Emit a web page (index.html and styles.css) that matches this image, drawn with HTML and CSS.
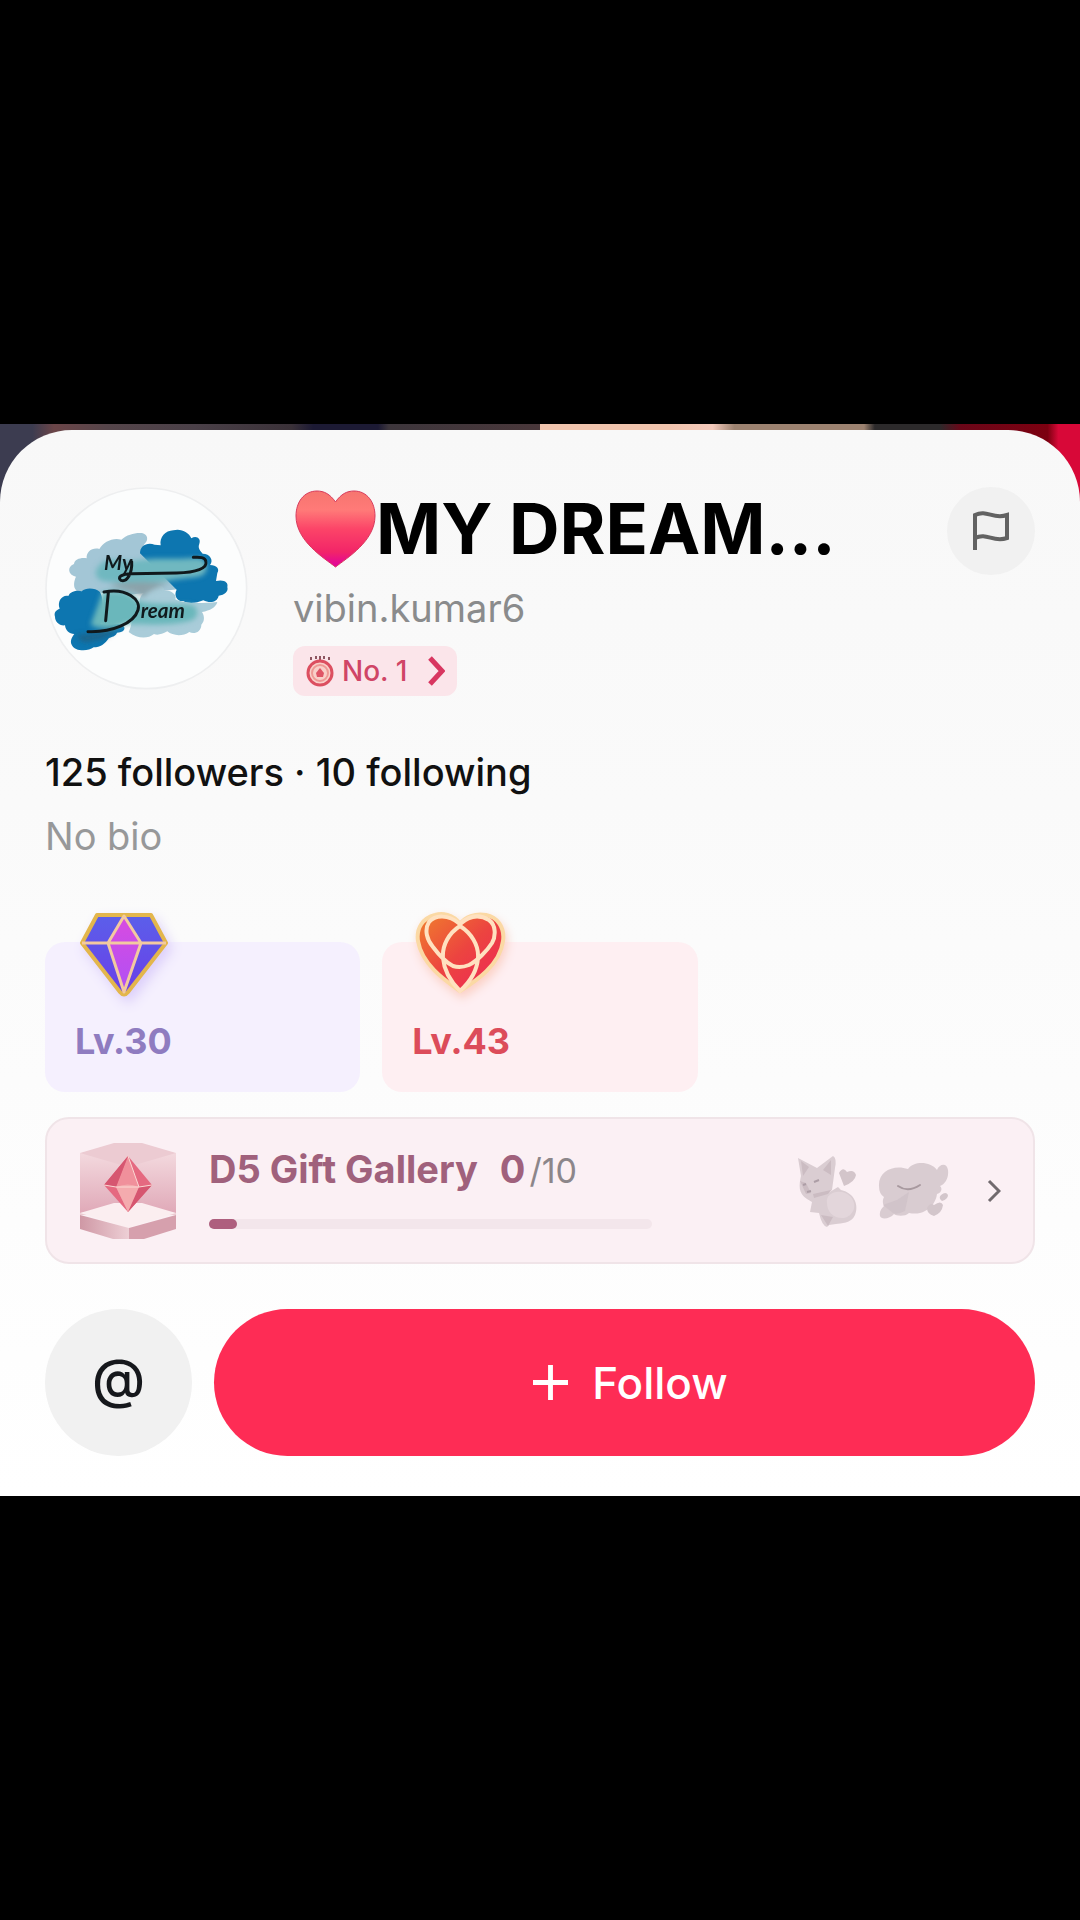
FILE: index.html
```html
<!DOCTYPE html>
<html lang="en">

<head>
    <meta charset="utf-8">
    <meta name="viewport" content="width=device-width, initial-scale=1.0">
    <title>MY DREAM - profile</title>
    <link rel="stylesheet" href="styles.css">
</head>

<body>
    <main class="stage">
        <section class="sheet">
            <header class="profile">
                <svg class="avatar" viewBox="45 51 609 609" role="img" aria-label="My Dream">
                    <defs>
                        <filter id="wash" x="-20%" y="-20%" width="140%" height="140%">
                            <feGaussianBlur stdDeviation="8" />
                        </filter>
                    </defs>
                    <circle cx="349" cy="355" r="301" fill="#fcfdfd" stroke="#eeeff0" stroke-width="5" />
                    <path fill="#a3c6d6" d="M140 362c-12-10-8-30-2-42-24-4-28-30-6-38 2-14 20-20 38-17-2-20 18-34 38-28 12-22 42-36 66-28 16-16 44-22 62-20 18 4 20 22 8 32l-14 24 100 40 40 70-180 20z" />
                    <path fill="#0d76b0" d="M330 250c0-22 20-34 44-26l18 2c-4-24 14-44 38-45 24-6 46 6 54 24 16-10 30 2 24 16-6 14 4 22 10 30 22 0 34 20 22 34 20 0 30 12 22 24l-4 24c24-6 38 4 34 18 4 14-8 24-26 26-4 20-26 24-46 14-20 8-44 12-60 2-18 2-30-16-20-34l-30-30z" />
                    <path fill="#a9ccd9" d="M296 486c10-14 10-60 34-86-4-20 8-34 30-40 10-20 40-18 44 2 20-2 38 14 32 26 26 14 74 12 126 8-4 16-22 26-46 30 10 16 6 30-2 38 0 22-22 30-36 22-20 14-50 12-66-2-18 10-30 12-40 8-20 16-50 14-76-6z" />
                    <path fill="#0d76b0" d="M75 440c-4-14 4-20 14-24-8-20 6-42 26-38 6-16 30-18 40-14 14-14 44-8 52 0 14 10 14 60 4 98 14 2 40 2 56 0 24 4 22 26-6 26-4 12-16 12-24 16-12 18-26 28-46 28-18 14-58 12-66-8-6-12 2-24 8-32-16 0-26-10-28-26-18 2-30-12-30-26z" />
                    <g filter="url(#wash)">
                        <path fill="#6fb8c0" d="M205 290c20-30 60-22 100-16 60-14 130-4 190-10 30-4 44 20 30 44-10 18-50 12-110 24-70 10-150 6-190 2-26-4-36-24-20-44z" />
                        <path fill="#8ba3aa" d="M236 346c60-14 130-12 180-4-30 10-60 16-74 40-20-18-60-22-106-36z" />
                        <path fill="#6bb7bb" d="M216 366c40-10 90-6 108 26 40 14 100 6 160 12 24 8 24 40-2 48-60 16-130 12-190 10-40 20-90 16-110 2 10-30 24-60 34-98z" />
                        <path fill="#245873" opacity=".6" d="M140 492c40 8 80-14 116-20 8 14-40 40-66 40-20 10-44 4-50-20z" />
                    </g>
                    <g fill="none" stroke="#10191c" stroke-width="9" stroke-linecap="round" stroke-linejoin="round">
                        <path d="M305 275c2 36-14 62-32 56-12-8 0-20 32-20l135-2c60-2 92-14 88-34-2-14-18-14-38-13" />
                        <path d="M235 368l-8 84M222 366c68-14 112 24 102 54-12 40-78 68-150 65" />
                    </g>
                    <text class="scrawl" x="222" y="300">My</text>
                    <text class="scrawl" x="332" y="443">ream</text>
                </svg>

                <div class="identity">
                    <h1 class="name">
                        <svg class="name-heart" viewBox="0 0 81 78" role="img" aria-label="heart">
                            <defs>
                                <linearGradient id="heartFill" x1="0" y1="0" x2="0" y2="1">
                                    <stop offset="0" stop-color="#f6756f" />
                                    <stop offset=".25" stop-color="#ff7a78" />
                                    <stop offset=".5" stop-color="#fc4468" />
                                    <stop offset=".8" stop-color="#f22568" />
                                    <stop offset="1" stop-color="#e000a0" />
                                </linearGradient>
                            </defs>
                            <path fill="url(#heartFill)" stroke="#d83a5c" stroke-width="1" d="M40.500 12C35 4 29 1 22 1 9 1 1 12 1 26c0 25 28 42 39.500 51C52 68 80 51 80 26 80 12 72 1 59 1 52 1 46 4 40.500 12z" />
                        </svg>
                        <span>MY DREAM...</span>
                    </h1>
                    <p class="username">vibin.kumar6</p>
                    <a class="rank" href="#">
                        <svg class="rank-medal" viewBox="0 0 28 32" aria-hidden="true">
                            <path d="M5 2v3M10 1v3M14 1v4M18 1v3M23 2v3" stroke="#8d5560" stroke-width="2" />
                            <circle cx="14" cy="18" r="12" fill="#f9cfc9" stroke="#dc4f60" stroke-width="3" />
                            <circle cx="14" cy="18" r="8" fill="none" stroke="#ee9a95" stroke-width="2" />
                            <path d="M14 13l4 5-1 4h-6l-1-4z" fill="#df5566" />
                        </svg>
                        <span>No. 1</span>
                        <svg class="rank-arrow" viewBox="0 0 18 30" aria-hidden="true">
                            <path d="M3 2l12 13L3 28" fill="none" stroke="#d83660" stroke-width="5" />
                        </svg>
                    </a>
                </div>

                <button class="report" type="button" aria-label="Report">
                    <svg viewBox="0 0 36 40" aria-hidden="true">
                        <path d="M2 39V4c12-6 18 5 32 0v23c-14 5-20-6-32 0" fill="none" stroke="#626262" stroke-width="4" />
                    </svg>
                </button>
            </header>

            <p class="stats">125 followers · 10 following</p>
            <p class="bio">No bio</p>

            <div class="levels">
                <div class="level level-gifter">
                    <svg class="level-icon" viewBox="0 0 92 88" aria-hidden="true">
                        <defs>
                            <linearGradient id="gemSide" x1="0" y1="0" x2="0" y2="1">
                                <stop offset="0" stop-color="#5b5fea" />
                                <stop offset="1" stop-color="#6a3ee8" />
                            </linearGradient>
                            <linearGradient id="gemCore" x1="0" y1="0" x2="0" y2="1">
                                <stop offset="0" stop-color="#d94be0" />
                                <stop offset="1" stop-color="#b050f5" />
                            </linearGradient>
                        </defs>
                        <path d="M19 3h54l15 28-38 49q-4 5-8 0L4 31z" fill="url(#gemSide)" stroke="#e3b64c" stroke-width="4" stroke-linejoin="round" />
                        <path d="M46 4l17 27-17 48-16-48z" fill="url(#gemCore)" />
                        <path d="M4 31h84M46 4L30 31l16 49 17-49z" fill="none" stroke="#f3c9a0" stroke-width="3" stroke-linejoin="round" />
                    </svg>
                    <span>Lv.30</span>
                </div>
                <div class="level level-fan">
                    <svg class="level-icon" viewBox="0 0 92 88" aria-hidden="true">
                        <defs>
                            <linearGradient id="fanFill" x1="0" y1="0" x2="1" y2="1">
                                <stop offset="0" stop-color="#f0802c" />
                                <stop offset=".5" stop-color="#ec4440" />
                                <stop offset="1" stop-color="#ee2458" />
                            </linearGradient>
                        </defs>
                        <path d="M45 12C38 2 27 1 20 3 8 6 1 16 3 29c4 24 28 40 42 50 16-10 40-26 43-50C90 15 82 5 71 3 60 1 50 5 45 12z" fill="url(#fanFill)" stroke="#fbd9a4" stroke-width="4" stroke-linejoin="round" />
                        <path d="M45 12C33 2 20 3 14 10 9 18 12 28 18 35c6 8 14 16 20 19 6 2 11 1 16-1 8-4 18-14 23-22 4-7 4-18-3-23C64 2 55 3 45 12zM45 14C34 21 27 33 28 46c1 12 6 22 17 33 10-9 17-20 18-33C64 33 56 21 45 14z" fill="none" stroke="#ffe1c0" stroke-width="4" />
                    </svg>
                    <span>Lv.43</span>
                </div>
            </div>

            <a class="gallery" href="#">
                <svg class="gallery-cube" viewBox="0 0 96 98" aria-hidden="true">
                    <defs>
                        <linearGradient id="wall" x1="0" y1="0" x2="0" y2="1">
                            <stop offset="0" stop-color="#f3d9de" />
                            <stop offset="1" stop-color="#e0a9b8" />
                        </linearGradient>
                        <linearGradient id="base" x1="0" y1="0" x2="1" y2="0">
                            <stop offset="0" stop-color="#cf98a5" />
                            <stop offset="1" stop-color="#edcfd5" />
                        </linearGradient>
                    </defs>
                    <path fill="#eccbd2" d="M0 11L34 1h28l34 10v62H0z" />
                    <path fill="url(#wall)" d="M0 11l48 14v40L0 71zM96 11L48 25v40l48 6z" />
                    <path fill="#fbeef0" d="M0 71l34-10h28l34 10-48 15z" />
                    <path fill="url(#base)" d="M0 73l49 13v11H33L0 87z" />
                    <path fill="#d6a0ad" d="M96 73L49 86v11h15l32-10z" />
                    <path fill="#e56980" d="M48 14l24 29-24 27-24-27z" />
                    <path fill="#f0909b" d="M48 14L36 45l12 25 11-25z" />
                    <path fill="#d65670" d="M48 14L24 43l12 2zM59 45l13-2-24 27z" />
                    <path fill="#f8c6c2" d="M36 45q12-5 23 0L48 70z" opacity=".5" />
                    <path fill="none" stroke="#fbd9d4" stroke-width="1" d="M24 43l12 2h23l13-2M48 14l11 31" />
                </svg>

                <div class="gallery-body">
                    <div class="gallery-title">
                        <label for="gifts">D5 Gift Gallery</label>
                        <span class="count"><b>0</b>/10</span>
                    </div>
                    <progress class="gallery-bar" id="gifts" value="28" max="443"></progress>
                </div>

                <svg class="gift-fox" viewBox="0 0 62 72" aria-hidden="true">
                    <path fill="#dacdd2" d="M1 3l19 10L36 1q4 2 2 12l-3 22-4 3 10-6 3 3c14 3 18 16 14 25-4 9-14 8-19 9l-7 1-2 2q-5-1-8-14l-9-1 2-10-5-3c-9-6-8-14-6-23z" />
                    <path fill="#e3d6db" d="M30 48c-2-12 16-15 24-6 7 9 2 19-7 21-10 1-17-6-17-15z" />
                    <path fill="#cbbcc2" d="M4 6l8 6-6 9zM34 5l-8 10 8 5zM3 26l6 2 5 10-5 1zM16 39l18-4-3 4-14 4zM24 60l12 2-5 9z" />
                    <path fill="none" stroke="#ad9ea6" stroke-width="2" d="M17 27l5-2M6 30l3-1M10 37l4-1" />
                    <path fill="#d3c5ca" d="M42 18q4-7 8-1 7-3 9 3-1 7-12 11z" />
                </svg>
                <svg class="gift-cloud" viewBox="0 0 72 58" aria-hidden="true">
                    <path fill="#d9ccd1" d="M1 24C0 9 16 2 30 7c6-8 22-8 29 1 2-6 10-8 11 0 1 8-3 14-8 16 3 3 1 7-3 8-1 8-6 14-12 17-5 3-11 3-16 2-4 4-13 3-15 1-4 5-13 6-14 2-1-5 2-8 4-10-2-4-1-7 0-9Q1 32 1 24z" />
                    <path fill="#ccbec4" d="M5 43l14-5 12-8-4 19q-8 4-12 2z" opacity=".6" />
                    <path fill="none" stroke="#a8999f" stroke-width="2" stroke-linecap="round" d="M20 24q10 7 22-1" />
                    <path fill="#d3c6cb" d="M49 46q3-6 7-3 7-5 9 0-1 8-9 11-7-2-7-8zM63 33q5-4 7 0 0 4-6 6-4-3-1-6z" />
                </svg>
                <svg class="gallery-arrow" viewBox="0 0 14 24" aria-hidden="true">
                    <path d="M2 2l10 10L2 22" fill="none" stroke="#716a6e" stroke-width="3" />
                </svg>
            </a>

            <div class="actions">
                <button class="mention" type="button" aria-label="Mention">@</button>
                <button class="follow" type="button">
                    <svg viewBox="0 0 36 36" aria-hidden="true">
                        <path d="M18 0v36M0 18h36" stroke="#fff" stroke-width="5" />
                    </svg>
                    Follow
                </button>
            </div>
        </section>
    </main>
</body>

</html>
```
FILE: styles.css
```css
* {
    box-sizing: border-box;
}

body {
    margin: 0;
    min-height: 100vh;
    display: flex;
    flex-direction: column;
    justify-content: center;
    background: #000;
    font-family: Inter, "Liberation Sans", sans-serif;
}

h1,
p {
    margin: 0;
}

a {
    color: inherit;
    text-decoration: none;
}

button {
    border: 0;
    padding: 0;
    font-family: inherit;
    cursor: pointer;
}

svg {
    display: block;
    flex: none;
}

/* strip of the live video behind the sheet */
.stage {
    padding-top: 6px;
    background: linear-gradient(to right, #3c3c50 0 3%, #6b4548 5%, #55454a 10%, #4a4048 18%, #3a3138 27%, #1c1a34 29% 35%, #3d363c 36%, #49373a 50%, #f0c4ae 50% 62%, #f3c9bb 66%, #9c8270 68% 80%, #2c2a2b 81% 87%, #6b0618 89%, #7c0010 97%, #d80838 98%);
}

.sheet {
    padding: 57px 45px 40px;
    border-radius: 72px 72px 0 0;
    background: linear-gradient(#f8f8f8, #fafafa 35%, #fff);
}

.profile {
    display: flex;
    align-items: flex-start;
}

.avatar {
    width: 203px;
    height: 203px;
}

.scrawl {
    font-family: Lato, sans-serif;
    font-size: 62px;
    font-style: italic;
    font-weight: 700;
    fill: #10191c;
}

.identity {
    flex: 1;
    min-width: 0;
    padding-left: 45px;
}

.name {
    display: flex;
    align-items: center;
    font-size: 70px;
    font-weight: 700;
    line-height: 84px;
    color: #000;
    white-space: nowrap;
}

.name-heart {
    width: 81px;
    height: 78px;
    margin-left: 2px;
}

.username {
    font-size: 38px;
    line-height: 75px;
    color: #8a8b8c;
}

.rank {
    display: inline-flex;
    align-items: center;
    height: 50px;
    padding: 0 12px 0 13px;
    border-radius: 12px;
    background: #fbe5ea;
    color: #d04566;
    font-size: 28px;
    font-weight: 500;
}

.rank-medal {
    width: 28px;
    height: 32px;
    margin-right: 8px;
}

.rank-arrow {
    width: 18px;
    height: 30px;
    margin-left: 20px;
}

.report {
    display: flex;
    align-items: center;
    justify-content: center;
    width: 88px;
    height: 88px;
    border-radius: 50%;
    background: #f1f1f1;
}

.report svg {
    width: 36px;
    height: 40px;
}

.stats {
    margin-top: 44px;
    font-size: 38px;
    font-weight: 500;
    line-height: 64px;
    color: #111;
}

.bio {
    font-size: 38px;
    line-height: 64px;
    color: #979899;
}

.levels {
    display: grid;
    grid-template-columns: repeat(3, 1fr);
    gap: 22px;
    margin-top: 74px;
}

.level {
    height: 150px;
    padding: 0 30px;
    border-radius: 20px;
    font-size: 36px;
    font-weight: 700;
    line-height: 48px;
}

.level-icon {
    width: 92px;
    height: 88px;
    margin: -30px 0 17px 3px;
}

.level-gifter {
    background: #f5f0fe;
    color: #8f7cc0;
}

.level-gifter .level-icon {
    filter: drop-shadow(4px 6px 6px #dccffa);
}

.level-fan {
    background: #feeff2;
    color: #dc4c5a;
}

.level-fan .level-icon {
    filter: drop-shadow(2px 5px 5px #fbd0c4);
}

.gallery {
    display: flex;
    align-items: center;
    height: 147px;
    margin-top: 25px;
    padding: 0 32px 0 33px;
    border: 2px solid #f0e4e8;
    border-radius: 24px;
    background: #fbf0f4;
}

.gallery-cube {
    width: 96px;
    height: 98px;
}

.gallery-body {
    flex: 1;
    margin: 0 145px 0 33px;
    padding-bottom: 8px;
}

.gallery-title {
    display: flex;
    align-items: baseline;
    gap: 22px;
    font-size: 38px;
    font-weight: 700;
    line-height: 48px;
    color: #a0617c;
    white-space: nowrap;
}

.count {
    font-size: 34px;
    font-weight: 400;
    color: #8c868a;
}

.count b {
    margin-right: 4px;
    font-size: 38px;
    color: #a0617c;
}

.gallery-bar {
    display: block;
    appearance: none;
    width: 100%;
    height: 10px;
    margin-top: 24px;
    border: 0;
}

.gallery-bar::-webkit-progress-bar {
    border-radius: 5px;
    background: #f3e6eb;
}

.gallery-bar::-webkit-progress-value {
    border-radius: 5px;
    background: #ae5f7e;
}

.gift-fox {
    width: 62px;
    height: 72px;
}

.gift-cloud {
    width: 72px;
    height: 58px;
    margin: 0 37px 0 19px;
}

.gallery-arrow {
    width: 14px;
    height: 24px;
}

.actions {
    display: flex;
    gap: 22px;
    margin-top: 45px;
}

.mention {
    flex: none;
    width: 147px;
    height: 147px;
    padding-bottom: 8px;
    border-radius: 50%;
    background: #f1f1f1;
    color: #16181c;
    font-size: 54px;
    font-weight: 500;
}

.follow {
    flex: 1;
    display: flex;
    align-items: center;
    justify-content: center;
    gap: 24px;
    padding-left: 12px;
    border-radius: 74px;
    background: #fe2c55;
    color: #fff;
    font-size: 44px;
    font-weight: 500;
}

.follow svg {
    width: 35px;
    height: 35px;
}
```
